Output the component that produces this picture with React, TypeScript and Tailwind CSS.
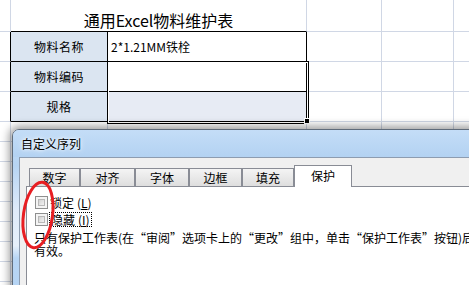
import React from "react";

const G = "border-[#d0d7e5]";

function BlankRow() {
  return (
    <>
      <div className={`border-r border-b ${G}`} />
      <div className={`border-r border-b ${G}`} />
      <div className={`border-r border-b ${G}`} />
      <div className={`border-r border-b ${G}`} />
      <div className={`border-r border-b ${G}`} />
      <div className={`border-b ${G}`} />
    </>
  );
}

function Tab({ label, w, active }: { label: string; w: string; active?: boolean }) {
  if (active) {
    return (
      <div
        className={`${w} h-[22px] -mb-px relative z-10 bg-white border border-b-0 border-[#898c95] flex items-center justify-center text-[12px] leading-none pb-[2px]`}
      >
        {label}
      </div>
    );
  }
  return (
    <div
      className={`${w} h-[18px] border border-b-0 border-[#898c95] bg-[linear-gradient(180deg,#f4f4f4,#dedede)] flex items-center justify-center text-[12px] leading-none`}
    >
      {label}
    </div>
  );
}

function Check() {
  return (
    <div className="w-[13px] h-[13px] border border-[#8e8f8f] bg-[#f4f4f4] p-[2px] shrink-0">
      <div className="w-full h-full border border-[#b8b8b8] bg-[linear-gradient(135deg,#d2d2d2,#f2f2f2)]" />
    </div>
  );
}

export default function App() {
  return (
    <div
      lang="zh-CN"
      className="relative w-[469px] h-[285px] overflow-hidden bg-white text-black font-['Noto_Sans_CJK_SC','Liberation_Sans',sans-serif]"
    >
      {/* Spreadsheet */}
      <div className="grid grid-cols-[11px_97px_199px_75px_72px_1fr] grid-rows-[32px_30px_30px_30px_repeat(9,20px)]">
        {/* row 0 */}
        <div className={`border-r border-b ${G}`} />
        <div className="col-span-2 border-r border-[#d0d7e5] border-b-black border-b flex items-end justify-center pb-[3px] text-[16px] leading-none">
          <span>通用Excel物料维护表</span>
        </div>
        <div className={`border-r border-b ${G}`} />
        <div className={`border-r border-b ${G}`} />
        <div className={`border-b ${G}`} />

        {/* row 1 */}
        <div className="border-r border-r-black border-b border-b-[#d0d7e5]" />
        <div className="bg-[#dbe5f1] border-r border-b border-black flex items-center justify-center text-[12px] tracking-[0.5px] leading-none">
          物料名称
        </div>
        <div className="bg-white border-r border-b border-black flex items-center pl-[3px] text-[12px] leading-none">
          2*1.21MM铁栓
        </div>
        <div className={`border-r border-b ${G}`} />
        <div className={`border-r border-b ${G}`} />
        <div className={`border-b ${G}`} />

        {/* row 2 */}
        <div className="border-r border-r-black border-b border-b-[#d0d7e5]" />
        <div className="bg-[#dbe5f1] border-r border-b border-black flex items-center justify-center text-[12px] tracking-[0.5px] leading-none">
          物料编码
        </div>
        <div className="bg-white border-r border-b border-black" />
        <div className={`border-r border-b ${G}`} />
        <div className={`border-r border-b ${G}`} />
        <div className={`border-b ${G}`} />

        {/* row 3 */}
        <div className="border-r border-r-black border-b border-b-[#d0d7e5]" />
        <div className="bg-[#dbe5f1] border-r border-b border-black flex items-center justify-center text-[12px] tracking-[0.5px] leading-none">
          规格
        </div>
        <div className="bg-[#e7ebf4] border-r border-b border-black" />
        <div className={`border-r border-b ${G}`} />
        <div className={`border-r border-b ${G}`} />
        <div className={`border-b ${G}`} />

        <BlankRow />
        <BlankRow />
        <BlankRow />
        <BlankRow />
        <BlankRow />
        <BlankRow />
        <BlankRow />
        <BlankRow />
        <BlankRow />
      </div>

      {/* selection outline */}
      <div className="absolute left-[107px] top-[61px] w-[202px] h-[63px] pointer-events-none shadow-[inset_0_0_0_1px_#000,inset_0_0_0_2px_#fff]" />
      <div className="absolute left-[304px] top-[118px] w-[6px] h-[6px] bg-black border border-white" />

      {/* Dialog */}
      <div className="absolute left-[12px] top-[129px] w-[520px] h-[180px] z-10 rounded-tl-[7px] border border-[#5f6b7a] bg-[linear-gradient(180deg,#c3dcf6_0%,#b6d4f3_20%,#dfeafa_45%,#e6f0fb_65%,#b7d5f4_72%,#b4d3f3_100%)] shadow-[0_0_9px_3px_rgba(0,0,0,0.38)] flex flex-col">
        <div className="h-[27px] shrink-0 flex items-center pl-[8px] text-[12px] leading-none [text-shadow:0_0_6px_#fff,0_0_3px_#fff] bg-[linear-gradient(180deg,#c4ddf7,#b3d2f2)] rounded-tl-[6px]">
          自定义序列
        </div>
        <div className="flex-1 ml-[6px] border-l border-t border-[#8d9cb0] bg-[#f0f0f0] pl-[6px] pt-[7px] flex flex-col">
          <div className="flex items-end pl-[3px]">
            <Tab label="数字" w="w-[51px]" />
            <Tab label="对齐" w="w-[55px]" />
            <Tab label="字体" w="w-[54px]" />
            <Tab label="边框" w="w-[53px]" />
            <Tab label="填充" w="w-[52px]" />
            <Tab label="保护" w="w-[58px]" active />
          </div>
          <div className="flex-1 bg-white border-l border-t border-[#898c95] pl-[8px] pt-[9px] text-[12px] leading-[13px]">
            <div className="h-[17px] flex items-start">
              <Check />
              <span className="ml-[2px] h-[13px] flex items-center">
                锁定<span className="ml-[3px]">(</span><span className="underline">L</span>)
              </span>
            </div>
            <div className="h-[17px] flex items-start">
              <Check />
              <span className="ml-[1px] -mt-[1px] h-[15px] px-[1px] flex items-center border border-dotted border-black">
                隐藏<span className="ml-[3px]">(</span><span className="underline">I</span>)
              </span>
            </div>
            <div className="-ml-[1px] mt-[1px] whitespace-nowrap leading-[13px]">
              只有保护工作表(在“审阅”选项卡上的“更改”组中，单击“保护工作表”按钮)后，
            </div>
            <div className="-ml-[1px] whitespace-nowrap leading-[13px]">有效。</div>
          </div>
        </div>
      </div>

      {/* red ellipse annotation */}
      <svg className="absolute left-[17px] top-[177px] z-20" width="42" height="76" viewBox="0 0 42 76">
        <ellipse cx="21" cy="38" rx="14.5" ry="33" fill="none" stroke="#e81e22" strokeWidth="3" transform="rotate(8 21 38)" />
      </svg>
    </div>
  );
}
